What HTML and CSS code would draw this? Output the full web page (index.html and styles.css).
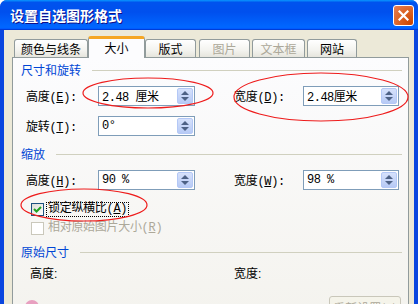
FILE: index.html
```html
<!DOCTYPE html>
<html>

<head>
    <meta charset="utf-8">
    <title>设置自选图形格式</title>
    <link rel="stylesheet" href="styles.css">
</head>

<body>
    <div class="window">
        <!-- Barre de titre -->
        <div class="titlebar">
            <span class="title">设置自选图形格式</span>
            <button class="close" type="button">
                <svg width="11" height="11" viewBox="0 0 11 11">
                    <path d="M1.5 1.5 L9.5 9.5 M9.5 1.5 L1.5 9.5" stroke="#fff" stroke-width="2.2" stroke-linecap="square" />
                </svg>
            </button>
        </div>

        <div class="client">
            <!-- Onglets -->
            <div class="tabs">
                <div class="tab tab-color">颜色与线条</div>
                <div class="tab tab-size active">大小</div>
                <div class="tab tab-layout">版式</div>
                <div class="tab tab-pic disabled">图片</div>
                <div class="tab tab-text disabled">文本框</div>
                <div class="tab tab-web">网站</div>
            </div>

            <div class="panel">
                <div class="group-title"><span>尺寸和旋转</span></div>
                <div class="row row-first">
                    <span class="label">高度(<u>E</u>):</span>
                    <div class="spin"><span class="value">2.48 厘米</span><span class="arrows"></span></div>
                    <span class="label label-right">宽度(<u>D</u>):</span>
                    <div class="spin spin-right"><span class="value">2.48厘米</span><span class="arrows"></span></div>
                </div>
                <div class="row row-second">
                    <span class="label">旋转(<u>T</u>):</span>
                    <div class="spin"><span class="value">0°</span><span class="arrows"></span></div>
                </div>

                <div class="group-title group-scale"><span>缩放</span></div>
                <div class="row row-first">
                    <span class="label">高度(<u>H</u>):</span>
                    <div class="spin"><span class="value">90 %</span><span class="arrows"></span></div>
                    <span class="label label-right">宽度(<u>W</u>):</span>
                    <div class="spin spin-right"><span class="value">98 %</span><span class="arrows"></span></div>
                </div>
                <div class="check check-lock">
                    <span class="box checked">
                        <svg width="9" height="9" viewBox="0 0 9 9">
                            <path d="M1 4 L3.5 6.5 L8 2" stroke="#21a121" stroke-width="2" fill="none" />
                        </svg>
                    </span>
                    <span class="check-label focused">锁定纵横比(<u>A</u>)</span>
                </div>
                <div class="check check-relative disabled">
                    <span class="box"></span>
                    <span class="check-label">相对原始图片大小(<u>R</u>)</span>
                </div>

                <div class="group-title group-orig"><span>原始尺寸</span></div>
                <div class="orig">
                    <span class="orig-label">高度:</span>
                    <span class="orig-label">宽度:</span>
                </div>

                <div class="footer">
                    <span class="footer-icon"></span>
                    <button class="reset" type="button">重新设置(<u>S</u>)</button>
                </div>
            </div>
        </div>

        <!-- Annotations rouges -->
        <svg class="marks" width="418" height="304" viewBox="0 0 418 304">
            <ellipse cx="148" cy="93" rx="65" ry="15" />
            <ellipse cx="321" cy="97" rx="87" ry="24" />
            <ellipse cx="84" cy="205" rx="63" ry="16" />
        </svg>
    </div>
</body>

</html>
```

FILE: styles.css
```css
/* Style général */
body {
    margin: 0;
    padding: 0;
    background: #ffffff;
    font-family: "Liberation Sans", "Noto Sans CJK SC", sans-serif;
    font-size: 12px;
    color: #000;
}

.window {
    position: relative;
    width: 418px;
    height: 304px;
    overflow: hidden;
    box-sizing: border-box;
    border-radius: 7px 7px 0 0;
    background: #0a46df;
}

/* Barre de titre */
.titlebar {
    height: 30px;
    display: flex;
    align-items: center;
    justify-content: space-between;
    padding: 0 4px 0 10px;
    background: linear-gradient(#0997ff 0, #0053ee 8%, #0050ee 40%, #0066ff 88%, #0066ff 93%, #005bff 95%, #003dd7 96%, #003dd7 100%);
}

.title {
    color: #fff;
    font-family: "Noto Sans CJK SC", sans-serif;
    font-weight: bold;
    font-size: 14px;
    line-height: 16px;
    text-shadow: 1px 1px 0 #0f1089;
}

.close {
    width: 21px;
    height: 21px;
    padding: 0;
    border: 1px solid #fff;
    border-radius: 3px;
    background: radial-gradient(circle at 90% 90%, #cc4600 0, #dc6527 55%, #e5805a 100%);
    display: flex;
    align-items: center;
    justify-content: center;
}

/* Zone client */
.client {
    margin: 0 4px;
    height: 274px;
    background: #ece9d8;
    padding-top: 6px;
    box-sizing: border-box;
}

/* Onglets */
.tabs {
    display: flex;
    align-items: flex-end;
    height: 21px;
    padding-left: 10px;
    position: relative;
    z-index: 2;
}

.tab {
    box-sizing: border-box;
    height: 18px;
    border: 1px solid #919b9c;
    border-bottom: none;
    border-radius: 3px 3px 0 0;
    background: linear-gradient(#ffffff, #f3f3ef 60%, #e6e5dd);
    font-family: "Noto Sans CJK SC", sans-serif;
    font-size: 12px;
    line-height: 17px;
    text-align: center;
}

.tab-color { width: 74px; }
.tab-size { width: 57px; }
.tab-layout { width: 51px; }
.tab-pic { width: 51px; margin-left: 3px; }
.tab-text { width: 53px; margin-left: 2px; }
.tab-web { width: 50px; margin-left: 2px; }

.tab.active {
    height: 22px;
    background: #fcfcfe;
    border-top: 3px solid #f5a623;
    line-height: 17px;
    margin-bottom: -1px;
}

.tab.disabled {
    color: #aca899;
}

/* Panneau */
.panel {
    margin-left: 8px;
    width: 397px;
    height: 260px;
    box-sizing: border-box;
    border: 1px solid #919b9c;
    background: linear-gradient(#fcfcfe, #f4f3ee);
    padding: 0 6px 0 8px;
}

.group-title {
    display: flex;
    align-items: center;
    height: 14px;
    margin-top: 5px;
    color: #0046d5;
    font-family: "Noto Sans CJK SC", sans-serif;
    line-height: 14px;
}

.group-title::after {
    content: "";
    flex: 1;
    margin-left: 11px;
    border-top: 1px solid #d0d0bf;
    margin-top: 1px;
}

.group-scale { margin-top: 11px; }
.group-orig { margin-top: 10px; }

/* Lignes de champs */
.row {
    display: flex;
    align-items: center;
    padding-left: 5px;
    height: 20px;
}

.row-first { margin-top: 9px; }
.row-second { margin-top: 10px; }

.label {
    flex: none;
    width: 72px;
    white-space: nowrap;
    font-family: "Liberation Mono", "Noto Sans CJK SC", monospace;
    letter-spacing: -0.3px;
}

.label-right {
    margin-left: 39px;
    width: 69px;
}

.spin {
    flex: none;
    box-sizing: border-box;
    width: 97px;
    height: 20px;
    border: 1px solid #7f9db9;
    background: #fff;
    display: flex;
    align-items: center;
    justify-content: space-between;
    padding: 1px;
}

.spin-right { width: 96px; }

.value {
    padding-left: 2px;
    font-family: "Liberation Mono", "Noto Sans CJK SC", monospace;
    font-size: 12px;
    letter-spacing: -0.5px;
}

.arrows {
    position: relative;
    width: 16px;
    height: 16px;
    box-sizing: border-box;
    border: 1px solid #b4c8f6;
    border-radius: 2px;
    background: linear-gradient(#d6e1fb, #b7caf5);
}

.arrows::before,
.arrows::after {
    content: "";
    position: absolute;
    left: 3px;
    border-left: 4px solid transparent;
    border-right: 4px solid transparent;
}

.arrows::before {
    top: 2px;
    border-bottom: 4px solid #4d6185;
}

.arrows::after {
    bottom: 2px;
    border-top: 4px solid #4d6185;
}

/* Cases à cocher */
.check {
    display: flex;
    align-items: center;
    height: 14px;
    padding-left: 10px;
    margin-top: 12px;
    gap: 3px;
}

.check-relative { margin-top: 5px; }

.box {
    box-sizing: border-box;
    width: 13px;
    height: 13px;
    border: 1px solid #1c5180;
    background: linear-gradient(135deg, #dcdcd7, #ffffff);
    display: flex;
    align-items: center;
    justify-content: center;
}

.check-label {
    font-family: "Liberation Mono", "Noto Sans CJK SC", monospace;
    letter-spacing: -0.3px;
    line-height: 13px;
    padding: 0 1px;
}

.check-label.focused {
    outline: 1px dotted #000;
}

.check.disabled {
    color: #aca899;
}

.check.disabled .box {
    border-color: #cac8bb;
    background: #fff;
}

/* Taille d'origine */
.orig {
    display: flex;
    height: 14px;
    margin-top: 8px;
    padding-left: 9px;
    line-height: 14px;
}

.orig-label {
    flex: none;
    width: 204px;
}

/* Pied */
.footer {
    display: flex;
    align-items: flex-start;
    justify-content: space-between;
    margin-top: 15px;
    padding-left: 4px;
}

.footer-icon {
    width: 14px;
    height: 10px;
    margin-top: 4px;
    border-radius: 7px 7px 0 0;
    background: #e8a0c0;
}

.reset {
    width: 72px;
    height: 22px;
    margin-right: 1px;
    border: 1px solid #c9c7ba;
    border-radius: 3px;
    background: #f5f4ea;
    color: #aca899;
    font-family: "Noto Sans CJK SC", sans-serif;
    font-size: 12px;
    padding: 0;
}

/* Ellipses d'annotation */
.marks {
    position: absolute;
    top: 0;
    left: 0;
    pointer-events: none;
    z-index: 5;
}

.marks ellipse {
    fill: none;
    stroke: #ee1c1c;
    stroke-width: 1.2;
}
```
